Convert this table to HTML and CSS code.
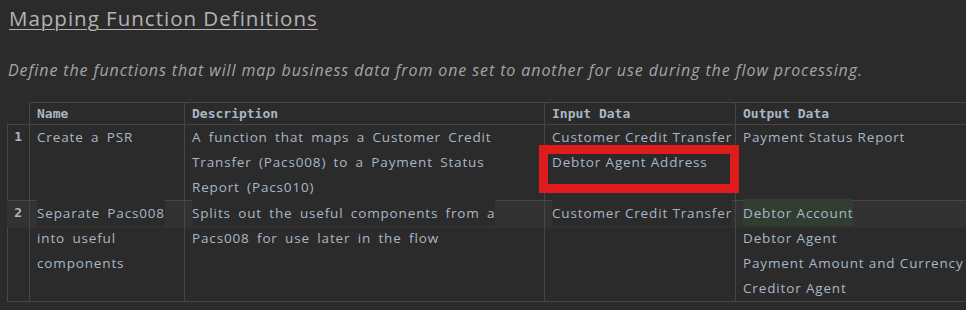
FILE: index.html
```html
<!DOCTYPE html>
<html lang="en">
<head>
<meta charset="utf-8">
<title>Mapping Function Definitions</title>
<link rel="stylesheet" href="styles.css">
</head>
<body>
<main class="doc">
  <h1 class="title">Mapping Function Definitions</h1>
  <p class="lead">Define the functions that will map business data from one set to another for use during the flow processing.</p>

  <div class="table-wrap">
    <table class="defs">
      <colgroup>
        <col class="c-num"><col class="c-name"><col class="c-desc"><col class="c-in"><col class="c-out">
      </colgroup>
      <thead>
        <tr>
          <th class="num"></th>
          <th>Name</th>
          <th>Description</th>
          <th>Input Data</th>
          <th>Output Data</th>
        </tr>
      </thead>
      <tbody>
        <tr>
          <td class="num">1</td>
          <td class="spaced">Create a PSR</td>
          <td class="spaced">A function that maps a Customer Credit Transfer (Pacs008) to a Payment Status Report (Pacs010)</td>
          <td>
            <div class="item">Customer Credit Transfer</div>
            <div class="item marked">Debtor Agent Address<span class="mark"></span></div>
          </td>
          <td><div class="item">Payment Status Report</div></td>
        </tr>
        <tr class="current">
          <td class="num">2</td>
          <td class="spaced"><span class="ln">Separate Pacs008</span> into useful components</td>
          <td class="spaced"><span class="ln">Splits out the useful components from a</span> Pacs008 for use later in the flow</td>
          <td><div class="item"><span class="ln">Customer Credit Transfer</span></div></td>
          <td>
            <div class="item"><span class="ln sel">Debtor Account</span></div>
            <div class="item">Debtor Agent</div>
            <div class="item">Payment Amount and Currency</div>
            <div class="item">Creditor Agent</div>
          </td>
        </tr>
      </tbody>
    </table>
  </div>
</main>
</body>
</html>
```

FILE: styles.css
```css
html, body {
  margin: 0;
  padding: 0;
  background: #2b2b2b;
  overflow: hidden;
}

.doc {
  padding: 0 0 0 7px;
  font-family: "Open Sans", "Noto Sans", sans-serif;
  color: #a9b7c6;
}

.title {
  margin: 0;
  padding: 4px 0 0 2px;
  font-size: 20.5px;
  font-weight: 400;
  letter-spacing: 1px;
  line-height: 28px;
  color: #b4b4b4;
  text-decoration: underline;
  text-decoration-thickness: 1px;
  text-underline-offset: 3px;
}

.lead {
  margin: 28px 0 0 1px;
  font-size: 16px;
  font-style: italic;
  letter-spacing: 0.9px;
  line-height: 20px;
  color: #a5a5a5;
}

.table-wrap {
  margin-top: 22px;
  width: 959px;
  overflow: hidden;
}

.defs {
  border-collapse: collapse;
  table-layout: fixed;
  width: 1070px;
  font-size: 13.5px;
  letter-spacing: 0.85px;
}

.c-num { width: 22px; }
.c-name { width: 155px; }
.c-desc { width: 360px; }
.c-in { width: 191px; }
.c-out { width: 342px; }

.defs th,
.defs td {
  border: 1px solid #464646;
  padding: 0 7px 0 7px;
  text-align: left;
  vertical-align: top;
}

.defs th {
  height: 21px;
  padding-top: 0;
  font-family: "DejaVu Sans Mono", "Liberation Mono", monospace;
  font-weight: 700;
  font-size: 13px;
  letter-spacing: 0;
  line-height: 21px;
  color: #a9b7c6;
}

.defs th.num {
  border: none;
  border-right: 1px solid #464646;
}

.defs td {
  line-height: 25px;
}

.defs td.num {
  padding: 0;
  text-align: center;
  font-family: "DejaVu Sans Mono", monospace;
  font-weight: 700;
  font-size: 13px;
  line-height: 24px;
  color: #a9b7c6;
}

.spaced {
  word-spacing: 3px;
}

.item {
  white-space: nowrap;
}

.marked {
  position: relative;
}

/* red annotation frame drawn over the cell */
.mark {
  position: absolute;
  left: -13px;
  top: -5px;
  width: 200px;
  height: 48px;
  box-sizing: border-box;
  border: 9px solid #e01b1b;
  pointer-events: none;
}

/* caret line highlight on the first text line of the current row */
.current td {
  background: linear-gradient(#323232 0 26px, transparent 26px);
}

.current td.num {
  position: relative;
}

.current td.num::before {
  content: "";
  position: absolute;
  left: -8px;
  top: 0;
  width: 8px;
  height: 26px;
  background: #323232;
}

.ln {
  background: #2b2b2b;
  padding: 5px 0 4px;
}

.ln.sel {
  background: #323d32;
}
```
